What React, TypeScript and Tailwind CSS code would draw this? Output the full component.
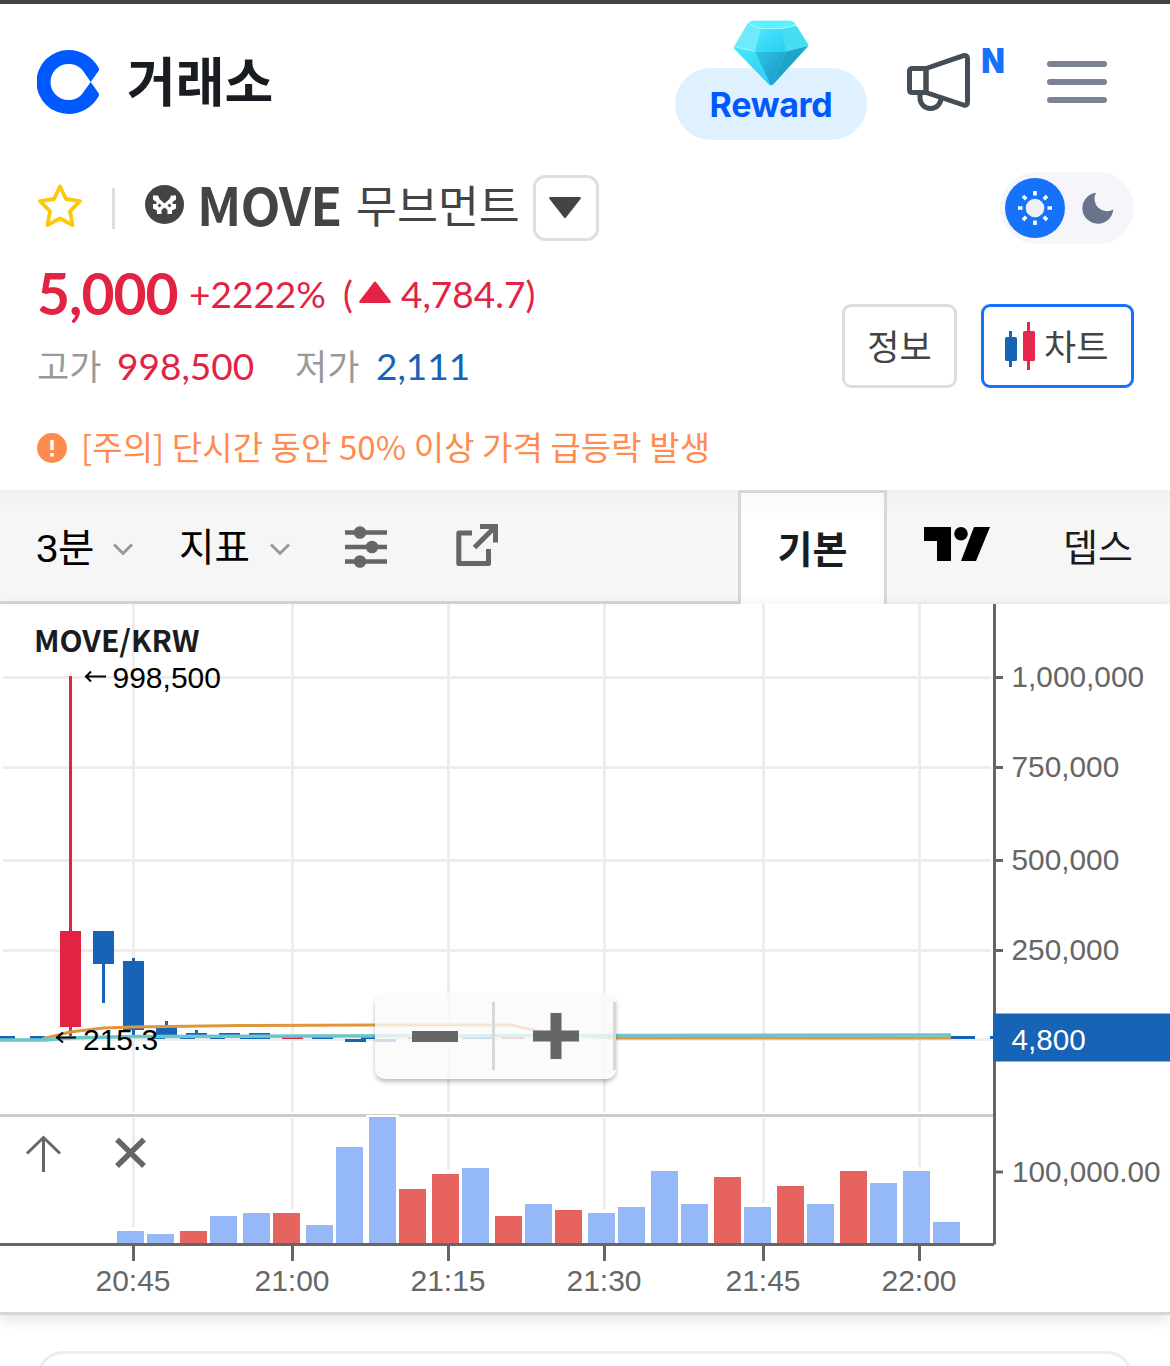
interface VolumeBar {
  x: number;
  top: number;
  up?: boolean;
}

const times = [
  { x: 133, label: "20:45" },
  { x: 292, label: "21:00" },
  { x: 448, label: "21:15" },
  { x: 604, label: "21:30" },
  { x: 763, label: "21:45" },
  { x: 919, label: "22:00" },
];

const prices = [
  { y: 677, label: "1,000,000" },
  { y: 767, label: "750,000" },
  { y: 860, label: "500,000" },
  { y: 950, label: "250,000" },
];

const volumes: VolumeBar[] = [
  { x: 117, top: 1231 },
  { x: 147, top: 1234 },
  { x: 180, top: 1231, up: true },
  { x: 210, top: 1216 },
  { x: 243, top: 1213 },
  { x: 273, top: 1213, up: true },
  { x: 306, top: 1225 },
  { x: 336, top: 1147 },
  { x: 369, top: 1117 },
  { x: 399, top: 1189, up: true },
  { x: 432, top: 1174, up: true },
  { x: 462, top: 1168 },
  { x: 495, top: 1216, up: true },
  { x: 525, top: 1204 },
  { x: 555, top: 1210, up: true },
  { x: 588, top: 1213 },
  { x: 618, top: 1207 },
  { x: 651, top: 1171 },
  { x: 681, top: 1204 },
  { x: 714, top: 1177, up: true },
  { x: 744, top: 1207 },
  { x: 777, top: 1186, up: true },
  { x: 807, top: 1204 },
  { x: 840, top: 1171, up: true },
  { x: 870, top: 1183 },
  { x: 903, top: 1171 },
  { x: 933, top: 1222 },
];

// [x, y, width, height, color]
const candles: [number, number, number, number, string][] = [
  [69, 676, 3, 360, "#e22343"],
  [60, 931, 21, 96, "#e22343"],
  [93, 931, 21, 33, "#1763b6"],
  [102, 964, 3, 39, "#1763b6"],
  [132, 958, 3, 78, "#1763b6"],
  [123, 961, 21, 69, "#1763b6"],
  [165, 1021, 3, 6, "#1763b6"],
  [156, 1027, 21, 8, "#1763b6"],
  [195, 1030, 3, 4, "#1763b6"],
  [186, 1033, 21, 3, "#1763b6"],
  [219, 1033, 21, 3, "#1763b6"],
  [249, 1033, 21, 3, "#1763b6"],
  [0, 1036, 15, 3, "#1763b6"],
  [30, 1036, 15, 3, "#1763b6"],
  [150, 1037, 15, 2, "#1763b6"],
  [180, 1037, 15, 2, "#1763b6"],
  [210, 1037, 15, 2, "#1763b6"],
  [240, 1037, 30, 2, "#1763b6"],
  [282, 1037, 21, 2, "#e22343"],
  [312, 1037, 21, 2, "#1763b6"],
  [345, 1039, 21, 3, "#1763b6"],
  [361, 1037, 14, 2, "#1763b6"],
  [375, 1039, 21, 3, "#1763b6"],
  [408, 1037, 21, 2, "#e22343"],
  [462, 1037, 31, 2, "#1763b6"],
  [502, 1037, 22, 2, "#e22343"],
  [951, 1036, 24, 3, "#1763b6"],
  [990, 1036, 4, 3, "#1763b6"],
];

function Logo() {
  return (
    <svg width="62" height="64" viewBox="0 0 62 64" fill="#0059ff">
      <path d="M31.500 0A32 32 0 1 0 31.500 64C44 64 55.500 57 61.500 46.500Q62.500 44.500 61.500 43L53.700 32L61.500 21Q62.500 19.500 61.500 17.500C55.500 7 44 0 31.500 0ZM31.500 14C38 14 43 16.500 46.500 21.500L53.700 32L46.500 42C43 47.500 38 50 31.500 50A18 18 0 0 1 31.500 14Z" />
    </svg>
  );
}

function Diamond() {
  return (
    <svg width="76" height="66" viewBox="733 19.500 76 66">
      <defs>
        <linearGradient id="gem" x1="0" y1="0" x2="1" y2="1">
          <stop offset="0" stopColor="#30c4e8" />
          <stop offset="1" stopColor="#1793c3" />
        </linearGradient>
        <linearGradient id="face" x1="0" y1="0" x2="1" y2="1">
          <stop offset="0" stopColor="#4ce6fd" />
          <stop offset="1" stopColor="#27cff2" />
        </linearGradient>
      </defs>
      <path d="M734 46L747 24Q749 20.500 754 20.300H789Q793 20.500 795 23.500L808 43Q809 45 807.500 47L774 83Q771 86 768 83L735 49Q733 47.500 734 46Z" fill="#6deafb" />
      <path d="M734 46L755 51L771 85Q769.500 85 768 83L735 49Z" fill="url(#face)" />
      <path d="M755 51L786 51L771 85Z" fill="url(#gem)" />
      <path d="M786 51L808 45.500L774 83Q772 85 771 85Z" fill="#1fa3c8" />
      <path d="M755 51L761 28H782L786 51Z" fill="url(#face)" />
      <path d="M782 28L797 26L808 45L786 51Z" fill="#46dcf2" />
      <path d="M749 22L761 28H782L796 24Q794 20.300 789 20.300H754Z" fill="#5af0fc" />
      <path d="M734 46L755 51M749 23L761 28H782L796 24" fill="none" stroke="#a5f6ff" strokeWidth="1" />
    </svg>
  );
}

function Header() {
  return (
    <header className="flex h-[156px] items-center pl-[37px]">
      <Logo />
      <h1 className="-mt-[6px] ml-[28px] w-[548px] text-[53px] leading-none font-bold text-[#191c20]">거래소</h1>
      <button className="relative mt-[44px] flex h-[72px] w-[192px] items-center justify-center rounded-full bg-[#dff0fe] font-['Inter',sans-serif] text-[34px] font-bold tracking-[-0.300px] text-[#0059ff]">
        <span className="absolute -top-[48px] left-[58px]">
          <Diamond />
        </span>
        Reward
      </button>
      <div className="relative ml-[40px] h-[60px] w-[64px]">
        <svg width="64" height="60" viewBox="907 52.500 64 60" fill="none" stroke="#454d57" strokeWidth="5" strokeLinejoin="round">
          <path d="M926 69H912.500Q909.500 69 909.500 72V90Q909.500 93 912.500 93H926Z" />
          <path d="M926 69L963.500 56.200Q967.500 55.400 967.500 58.900V102.500Q967.500 106.500 963.500 105.500L926 93Z" />
          <path d="M920 94V98.500A10.500 10.500 0 0 0 941 98.500" />
        </svg>
        <span className="absolute -top-[8px] left-[73px] scale-x-90 font-['Inter',sans-serif] text-[34px] leading-none font-black text-[#1772fb]">N</span>
      </div>
      <div className="ml-[76px] flex flex-col gap-[12px]">
        <div className="h-[6px] w-[60px] rounded-full bg-[#7b8294]" />
        <div className="h-[6px] w-[60px] rounded-full bg-[#7b8294]" />
        <div className="h-[6px] w-[60px] rounded-full bg-[#7b8294]" />
      </div>
    </header>
  );
}

function Ticker() {
  return (
    <section>
      <div className="flex h-[96px] items-center pr-[36px] pl-[37px] text-[#444]">
        <svg className="-mt-[5px]" width="46" height="46" viewBox="0 0 46 46" fill="none" stroke="#fdc70c" strokeWidth="3.800" strokeLinejoin="round">
          <path d="M23 3.500L29 16L43 18.200L33 28.200L35.500 42L23 35.500L10.500 42L13 28.200L3 18.200L17 16Z" />
        </svg>
        <div className="ml-[29px] h-[41px] w-[3px] bg-[#ddd]" />
        <svg className="-mt-[7px] ml-[30px]" width="39" height="39" viewBox="0 0 39 39">
          <circle cx="19.500" cy="19.500" r="19.500" fill="#444" />
          <path
            d="M8 10.500H13L14.500 14L19.500 18.500L24.500 14L26 10.500H31V14.500L27.500 17V19H31V23.500L27 25.500V29H22.500V25L19.500 22.500L16.500 25V29H12V25.500L8 23.500V19H11.500V17L8 14.500Z"
            fill="#fff"
          />
          <path d="M12.500 20.500L14.500 18.500L16.500 20.500L14.500 22.500ZM22.500 20.500L24.500 18.500L26.500 20.500L24.500 22.500Z" fill="#444" />
        </svg>
        <span className="ml-[13px] -mt-[8px] w-[159px] text-[52px] leading-none font-bold tracking-[-0.900px]">MOVE</span>
        <span className="-mt-[8px] w-[177px] text-[44.500px] leading-none">무브먼트</span>
        <button className="flex size-[66px] items-center justify-center rounded-[12px] border-3 border-[#e0e0e0]">
          <svg className="-ml-[2px]" width="32" height="22" viewBox="0 0 32 22" fill="#444">
            <path d="M1 0H31Q32.500 0.500 31.500 2L17 20.500Q16 21.500 15 20.500L0.500 2Q-0.500 0.500 1 0Z" />
          </svg>
        </button>
        <div className="ml-auto flex h-[72px] w-[134px] items-center rounded-full bg-[#f6f6fa] pl-[5px]">
          <div className="flex size-[60px] items-center justify-center rounded-full bg-[#1772fb]">
            <svg width="36" height="36" viewBox="-18 -18 36 36" stroke="#fff" strokeWidth="3.600">
              <circle r="9.300" fill="#edf0f4" stroke="none" />
              <path d="M0 -17V-12.500M0 17V12.500M-17 0H-12.500M17 0H12.500M-12 -12L-8.800 -8.800M12 12L8.800 8.800M-12 12L-8.800 8.800M12 -12L8.800 -8.800" />
            </svg>
          </div>
          <svg className="ml-[17px]" width="32" height="32" viewBox="0 0 32 32" fill="#69738a">
            <path d="M14 0.800A15.500 15.500 0 1 0 31.300 17.500A12.500 12.500 0 0 1 14 0.800Z" />
          </svg>
        </div>
      </div>

      <div className="flex h-[146px] justify-between pr-[36px] pl-[37px]">
        <div>
          <div className="flex h-[74px] items-center font-['Lato',sans-serif] text-[#e22343]">
            <span className="w-[152px] text-[57px] leading-none font-bold tracking-[-1px]">5,000</span>
            <span className="w-[154px] text-[37px] leading-none">+2222%</span>
            <span className="w-[16px] text-[37px] leading-none">(</span>
            <svg className="-mt-[3px]" width="32" height="22" viewBox="0 0 32 22" fill="#e22343">
              <path d="M1 22H31Q32.500 21.500 31.500 20L17 1Q16 0 15 1L0.500 20Q-0.500 21.500 1 22Z" />
            </svg>
            <span className="ml-[10px] text-[37px] leading-none">4,784.7)</span>
          </div>
          <div className="flex h-[72px] items-center pb-[4px] leading-none">
            <span className="w-[80px] text-[35px] text-[#999]">고가</span>
            <span className="mt-[3px] w-[178px] font-['Lato',sans-serif] text-[37px] text-[#e22343]">998,500</span>
            <span className="w-[81px] text-[35px] text-[#999]">저가</span>
            <span className="mt-[3px] font-['Lato',sans-serif] text-[37px] text-[#1763b6]">2,111</span>
          </div>
        </div>
        <div className="mt-[48px] flex h-[84px] gap-[24px] text-[35px] leading-none text-[#444]">
          <button className="w-[115px] rounded-[9px] border-3 border-[#ddd] pb-[4px]">정보</button>
          <button className="flex w-[153px] items-center rounded-[9px] border-3 border-[#1772fb] pl-[21px]">
            <svg width="30" height="48" viewBox="0 0 30 48">
              <path d="M4 9H7V45H4Z" fill="#1763b6" />
              <rect y="15" width="12" height="24" rx="1.500" fill="#1763b6" />
              <path d="M22 0H25V48H22Z" fill="#e6264f" />
              <rect x="18" y="9" width="12" height="30" rx="1.500" fill="#e6264f" />
            </svg>
            <span className="-mt-[4px] ml-[9px]">차트</span>
          </button>
        </div>
      </div>

      <div className="flex h-[88px] items-center pt-[4px] pl-[37px] text-[#ff8c4f]">
        <svg width="30" height="30" viewBox="0 0 30 30">
          <circle cx="15" cy="15" r="15" fill="#ff8c4f" />
          <path d="M15 7V17M15 20V23.500" stroke="#fff" strokeWidth="3.500" />
        </svg>
        <span className="-mt-[4px] ml-[14px] text-[33px] leading-none tracking-[0.080px] whitespace-nowrap">[주의] 단시간 동안 50% 이상 가격 급등락 발생</span>
      </div>
    </section>
  );
}

function Chevron() {
  return (
    <svg className="mt-[7px]" width="20" height="13" viewBox="0 0 20 13" fill="none" stroke="#999" strokeWidth="3">
      <path d="M1 1.500L10 10.500L19 1.500" />
    </svg>
  );
}

function Toolbar() {
  return (
    <div className="flex h-[114px] bg-linear-to-b from-[#f1f1f1] to-[#f6f6f6] to-20% font-['Liberation_Sans','Noto_Sans_CJK_KR',sans-serif] text-black">
      <div className="flex w-[738px] items-center border-b-3 border-[#d8d8d8] pl-[36px]">
        <span className="mt-[6px] w-[77px] text-[39.500px] leading-none">3분</span>
        <Chevron />
        <span className="mt-[5px] ml-[46px] w-[91px] text-[38.500px] leading-none">지표</span>
        <Chevron />
        <svg className="mt-[2px] ml-[55px]" width="42" height="42" viewBox="0 0 42 42" stroke="#666" strokeWidth="4.500" fill="#666">
          <path d="M0 6.500H42M0 21H42M0 35.500H42" />
          <g stroke="none">
            <circle cx="15" cy="6.500" r="6.300" />
            <circle cx="27" cy="21" r="6.300" />
            <circle cx="15" cy="35.500" r="6.300" />
          </g>
        </svg>
        <svg className="-mt-[2px] ml-[69px]" width="42" height="42" viewBox="456 524 42 42" fill="none" stroke="#666" strokeWidth="5">
          <path d="M472 533H458.800V563.500H488.500V549" strokeLinejoin="round" />
          <path d="M480 526.500H495.500V542.500M474.500 547.500L495 527" />
        </svg>
      </div>
      <div className="flex w-[149px] items-center justify-center border-x-3 border-t-3 border-[#d8d8d8] bg-linear-to-b from-[#f9f9f9] to-white to-25% pt-[3px] text-[38px] leading-none font-bold text-[#191c20]">
        기본
      </div>
      <div className="flex flex-1 items-center border-b-3 border-[#f2f2f2] pl-[37px]">
        <svg className="-mt-[3px]" width="66" height="34" viewBox="0 0 66 34">
          <path d="M0 0H27V34H13V14H0ZM50 0H66L52 34H37Z" />
          <circle cx="37" cy="6.800" r="6.800" />
        </svg>
        <span className="mt-[4px] ml-[73px] text-[38px] leading-none text-[#191c20]">뎁스</span>
      </div>
    </div>
  );
}

function Chart() {
  return (
    <div className="relative h-[711px] border-b-3 border-[#d6d6d6] bg-white shadow-[0_4px_14px_rgba(0,0,0,0.12)]">
      <svg width="1170" height="708" viewBox="0 604 1170 708" className="font-['Liberation_Sans',sans-serif]">
        <g stroke="#ededed" strokeWidth="3">
          {times.map((t) => (
            <path key={t.x} d={`M${t.x + 0.5} 604V1112M${t.x + 0.5} 1118V1243`} />
          ))}
          {prices.map((p) => (
            <path key={p.y} d={`M3 ${p.y + 0.5}H991`} />
          ))}
          <path d="M3 1039.500H991" />
        </g>
        <path d="M0 1115.500H994" stroke="#ccc" strokeWidth="3" />

        {volumes.map((v) => (
          <rect key={v.x} x={v.x - 3} y={v.top - (v.top > 1117 ? 4 : 2)} width="33" height={1246 - v.top} fill="#fff" />
        ))}
        {volumes.map((v) => (
          <rect key={v.x} x={v.x} y={v.top} width="27" height={1243 - v.top} fill={v.up ? "#e66360" : "#95b8f6"} />
        ))}

        {candles.map(([x, y, w, h, color]) => (
          <rect key={`${x}-${y}`} x={x} y={y} width={w} height={h} fill={color} />
        ))}
        <path d="M42 1039L70 1032L103 1028L133 1027L240 1025.500L375 1025H512L545 1033L612 1038H951" fill="none" stroke="#de963f" strokeWidth="3" />
        <path d="M0 1040H45L70 1038L133 1036.500L300 1036L951 1035" fill="none" stroke="#6cc5cd" strokeWidth="3.500" />

        <g fill="none" stroke="#000" strokeWidth="2">
          <path d="M85 676.500H106M91 671.500L86 676.500L91 681.500" />
          <path d="M56 1037.500H76M63 1032.500L57 1037.500L63 1042.500" />
        </g>
        <text x="112.500" y="688" fontSize="30">998,500</text>
        <text x="83" y="1050" fontSize="30">215.3</text>
        <text x="34" y="651.500" fontSize="30" className="font-['Noto_Sans_CJK_KR',sans-serif] font-bold" fill="#191c20">
          MOVE/KRW
        </text>

        <g stroke="#666" strokeWidth="3" fill="none">
          <path d="M994.500 604V1244.500M0 1244.500H994" />
          {prices.map((p) => (
            <path key={p.y} d={`M996 ${p.y + 0.5}H1003`} />
          ))}
          <path d="M996 1172H1003" />
          {times.map((t) => (
            <path key={t.x} d={`M${t.x + 0.5} 1246V1261`} />
          ))}
          <path d="M43.500 1172V1138M27 1153.500L43.500 1137.500L60 1153.500" />
          <path d="M117 1139.500L144 1166M144 1139.500L117 1166" strokeWidth="5.500" />
        </g>

        <g fill="#666" fontSize="30">
          {prices.map((p) => (
            <text key={p.y} x="1011.500" y={p.y + 10} fontSize="29.800">
              {p.label}
            </text>
          ))}
          <text x="1012" y="1182" fontSize="29.700">100,000.00</text>
          {times.map((t) => (
            <text key={t.x} x={t.x} y="1291" textAnchor="middle">
              {t.label}
            </text>
          ))}
        </g>
        <rect x="993" y="1013.500" width="177" height="48" fill="#1763b6" />
        <text x="1011.500" y="1050" fontSize="29.700" fill="#fff">4,800</text>
      </svg>

      <div className="absolute top-[389px] left-[375px] flex h-[86px] w-[241px] items-center rounded-[10px] bg-[#fafafa]/80 shadow-[0_3px_4px_rgba(0,0,0,0.25)]">
        <button className="flex h-[68px] w-[120px] items-center justify-center border-r-3 border-[#d8d8d8] pl-[3px]">
          <span className="h-[11px] w-[46px] bg-[#666]" />
        </button>
        <button className="flex h-[68px] w-[121px] items-center justify-center border-r-3 border-[#d8d8d8] pl-[4px]">
          <svg width="46" height="46" viewBox="0 0 46 46" stroke="#666" strokeWidth="11">
            <path d="M0 23H46M23 0V46" />
          </svg>
        </button>
      </div>
    </div>
  );
}

export default function App() {
  return (
    <div className="h-[1366px] w-[1170px] overflow-hidden bg-white font-['Noto_Sans_CJK_KR',sans-serif]">
      <div className="h-[4px] bg-[#434343]" />
      <Header />
      <Ticker />
      <Toolbar />
      <Chart />
      <div className="mx-[37px] mt-[36px] h-[100px] rounded-[26px] border-3 border-[#ededed]" />
    </div>
  );
}
